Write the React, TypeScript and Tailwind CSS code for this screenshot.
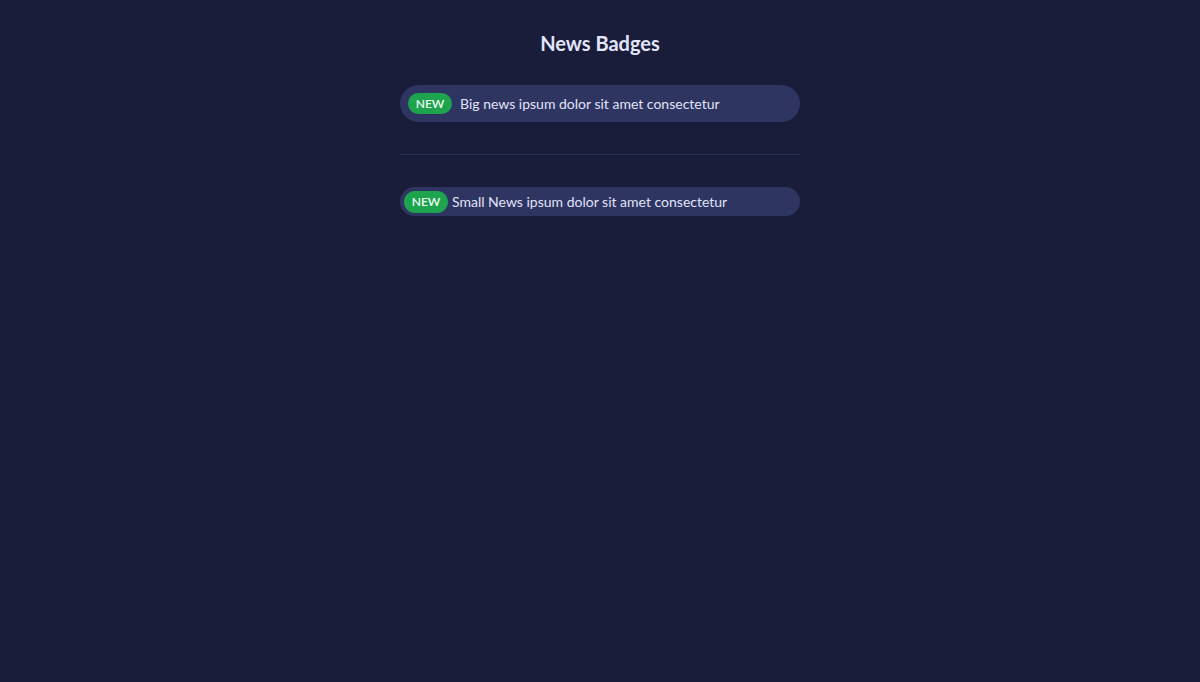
export default function App() {
  return (
    <div
      className="min-h-screen bg-[#1a1d3a] text-[#e0e3fa]"
      style={{ fontFamily: 'Lato, "Noto Sans", sans-serif' }}
    >
      <div className="mx-auto flex w-[400px] flex-col pt-[29px]">
        <h1 className="text-center text-xl leading-7 font-bold text-[#e2e5fc]">News Badges</h1>

        <div className="mt-[28px] flex h-[37px] items-center gap-2 rounded-full bg-[#2f3561] px-2">
          <span className="flex h-[21px] w-[44px] items-center justify-center rounded-full bg-[#1ea34f] text-xs font-semibold text-[#effff4]">
            NEW
          </span>
          <span className="text-sm">Big news ipsum dolor sit amet consectetur</span>
        </div>

        <hr className="my-8 border-t border-[#293258]" />

        <div className="flex h-[29px] items-center gap-1 rounded-full bg-[#2f3561] px-1">
          <span className="flex h-[22px] w-[44px] items-center justify-center rounded-full bg-[#1ea34f] text-xs font-semibold text-[#effff4]">
            NEW
          </span>
          <span className="text-sm">Small News ipsum dolor sit amet consectetur</span>
        </div>
      </div>
    </div>
  );
}
